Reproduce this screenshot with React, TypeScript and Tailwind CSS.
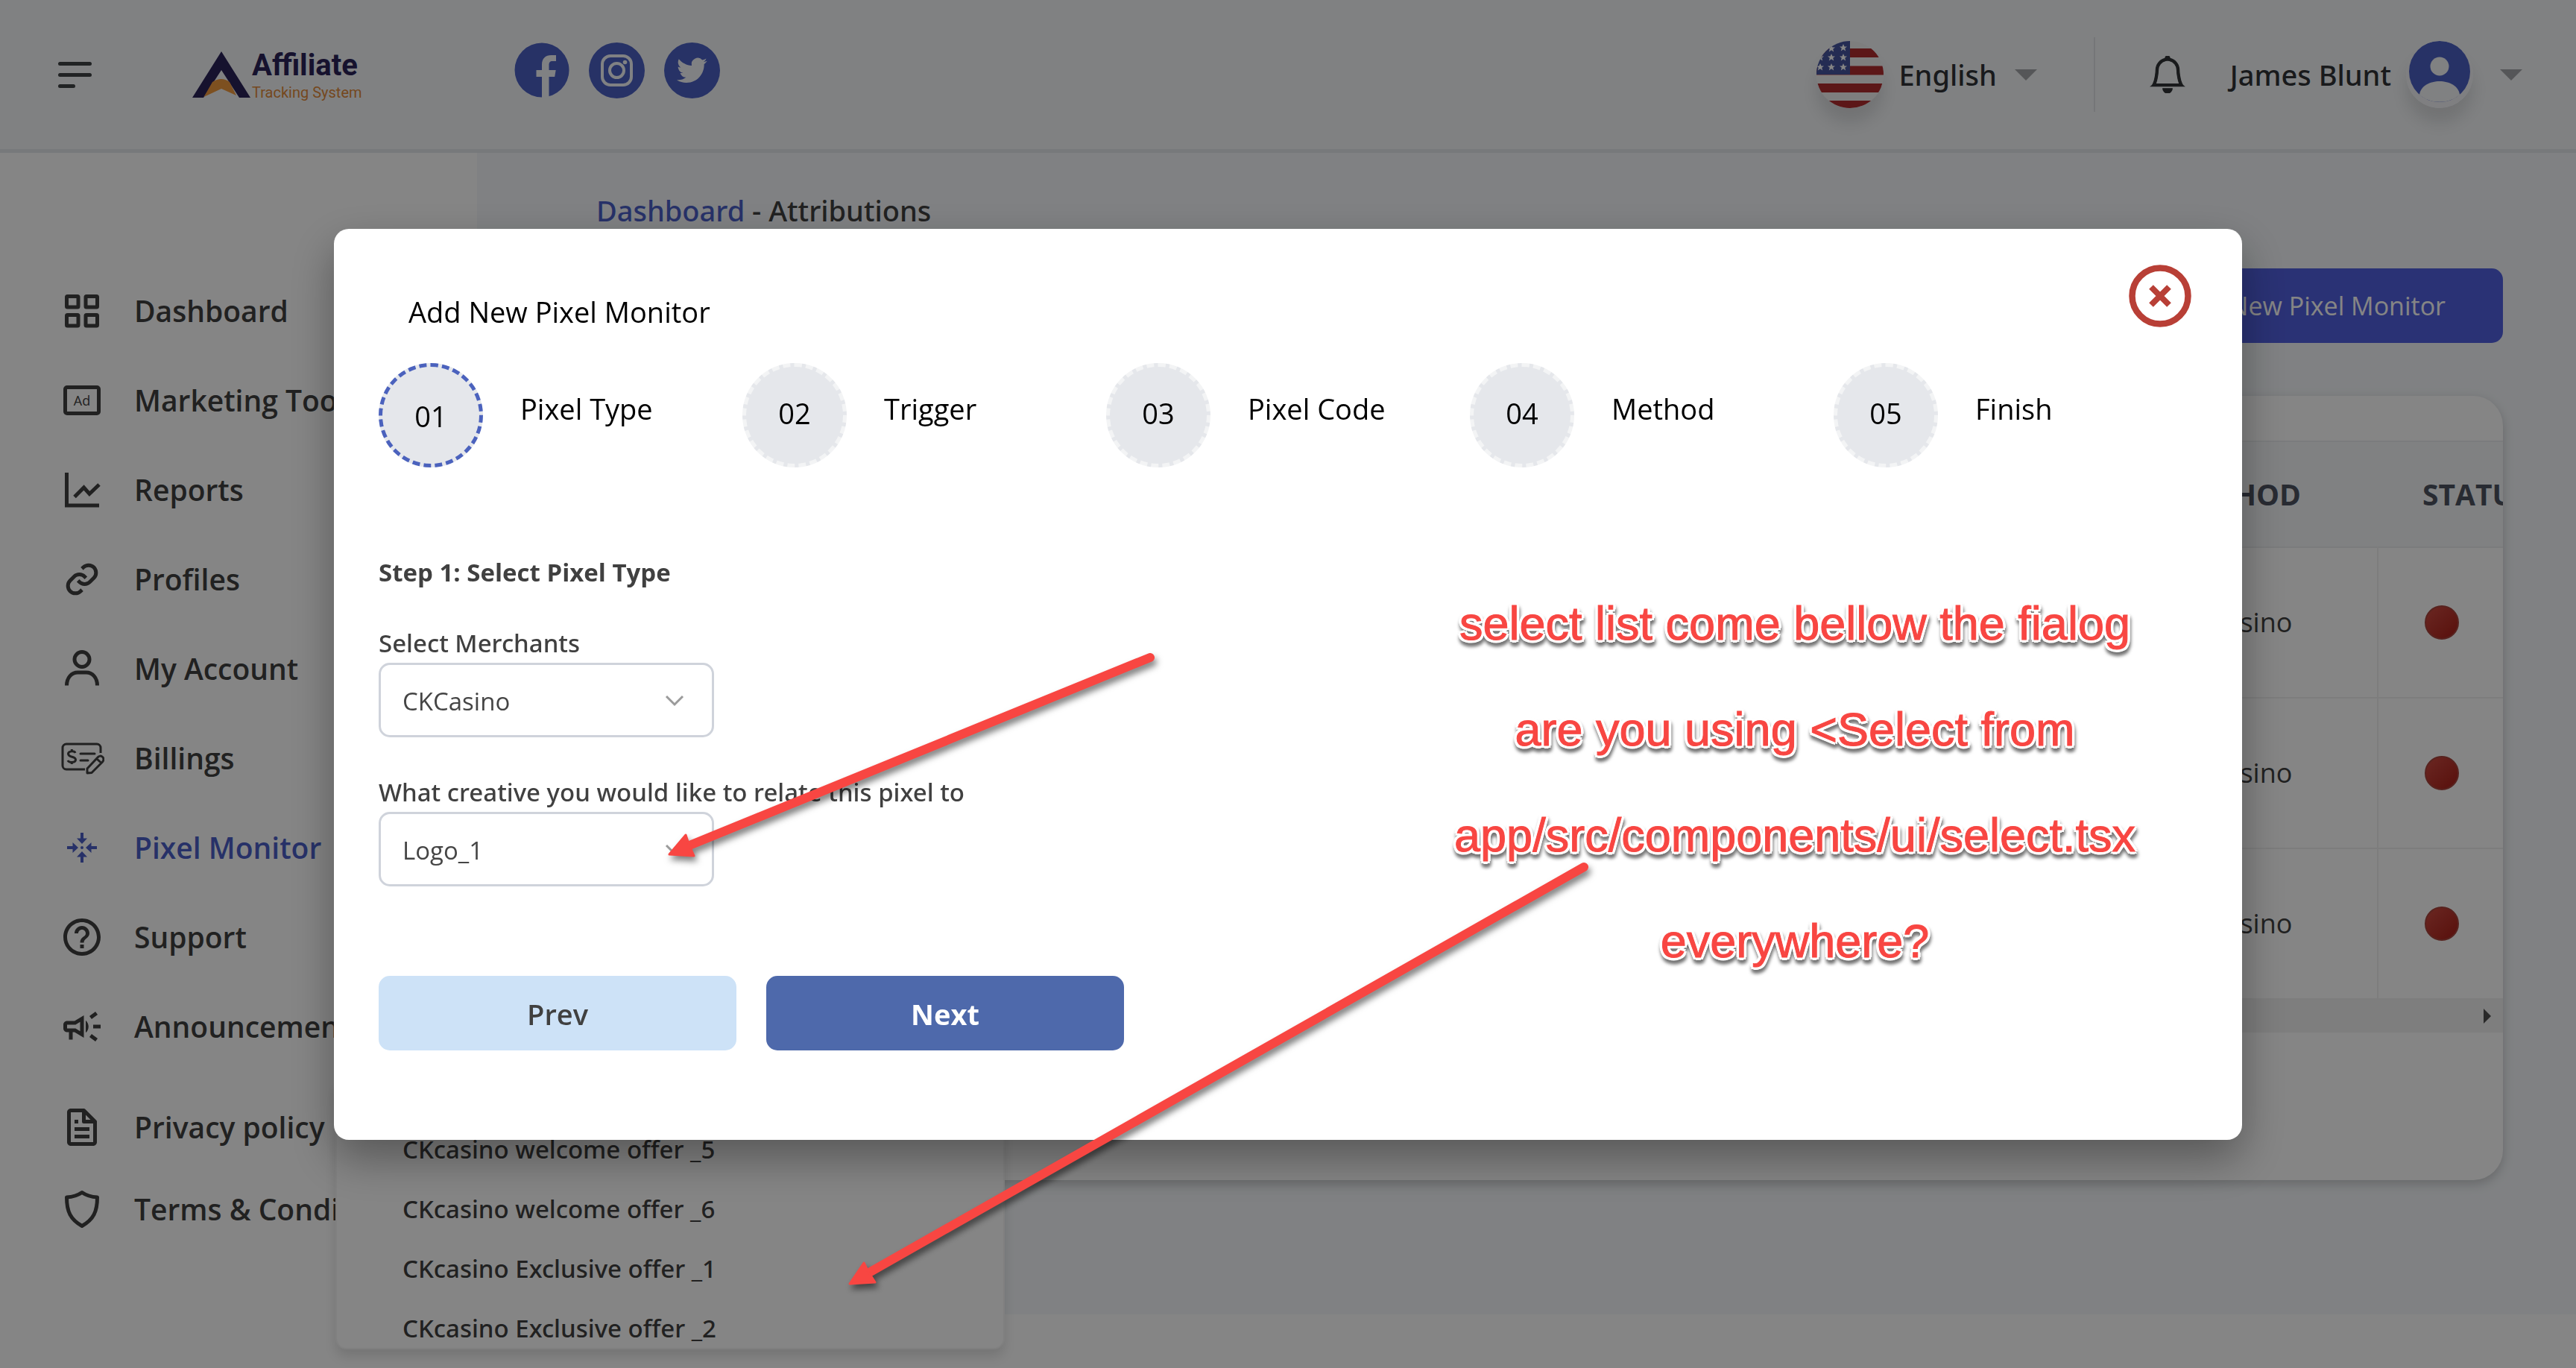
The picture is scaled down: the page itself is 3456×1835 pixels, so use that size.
import type { ReactNode } from "react";
import { BiFile, BiLink } from "react-icons/bi";
import { BsBell } from "react-icons/bs";
import { MdHelpOutline, MdOutlineCampaign } from "react-icons/md";

const iconBox = "size-[60px]";

function DashboardIcon() {
  return (
    <svg className={iconBox} viewBox="0 0 60 60" fill="none" stroke="currentColor" strokeWidth="5">
      <rect x="9.500" y="10.500" width="15.500" height="14.500" rx="1" />
      <rect x="35" y="10.500" width="15.500" height="14.500" rx="1" />
      <rect x="9.500" y="35.500" width="15.500" height="14.500" rx="1" />
      <rect x="35" y="35.500" width="15.500" height="14.500" rx="1" />
    </svg>
  );
}

function AdIcon() {
  return (
    <span className="flex h-10 w-[50px] items-center justify-center rounded-[5px] border-[5px] border-current text-[18px] leading-none font-normal">
      Ad
    </span>
  );
}

function ReportsIcon() {
  return (
    <svg className={iconBox} viewBox="0 0 60 60" fill="none" stroke="currentColor" strokeWidth="5">
      <path d="M9.500 7v44h43.500" />
      <path d="M20 39.500 32.500 27l7.500 8.500L53 23" />
    </svg>
  );
}

function AccountIcon() {
  return (
    <svg className={iconBox} viewBox="0 0 60 60" fill="none" stroke="currentColor" strokeWidth="5">
      <circle cx="30" cy="17.500" r="10" />
      <path d="M9.500 52.500c0-10 6-17.500 15-17.500h11c9 0 15 7.500 15 17.500" />
    </svg>
  );
}

function BillingsIcon() {
  return (
    <svg className={iconBox} viewBox="0 0 60 60" fill="none" stroke="currentColor" strokeWidth="3" strokeLinejoin="round">
      <path d="M34 45H9a5 5 0 0 1-5-5V16a5 5 0 0 1 5-5h41a5 5 0 0 1 5 5v7" />
      <path d="M28 24h19M28 33h10" strokeLinecap="round" />
      <path d="M21 23c-1-3-9-3-9.500 1 0 5.500 10 3 10 8 0 4.500-9 4.500-10.500 1M16.300 18v3M16.300 35v3" />
      <path d="M37 50v-6l14-15c4-5 11 1 6.500 6L43 49.500ZM50 31l6 5.500" />
    </svg>
  );
}

function PixelIcon() {
  return (
    <svg className={iconBox} viewBox="0 0 60 60" fill="currentColor">
      <circle cx="30" cy="30" r="2" />
      {[0, 90, 180, 270].map((angle) => (
        <path key={angle} d="M28 10h4v7.500h5L30 25l-7-7.500h5Z" transform={`rotate(${angle} 30 30)`} />
      ))}
    </svg>
  );
}

function ShieldIcon() {
  return (
    <svg className={iconBox} viewBox="0 0 60 60" fill="none" stroke="currentColor" strokeWidth="5" strokeLinejoin="round">
      <path d="M30 7.500c-5 3.500-12 6-20.500 6.500 0 19 5 30 20.500 38.500 15.500-8.500 20.500-19.500 20.500-38.500-8.500-.5-15.500-3-20.500-6.500Z" />
    </svg>
  );
}

const mainLinks: { label: string; icon: ReactNode; active?: boolean }[] = [
  { label: "Dashboard", icon: <DashboardIcon /> },
  { label: "Marketing Tools", icon: <AdIcon /> },
  { label: "Reports", icon: <ReportsIcon /> },
  { label: "Profiles", icon: <BiLink className={iconBox} /> },
  { label: "My Account", icon: <AccountIcon /> },
  { label: "Billings", icon: <BillingsIcon /> },
  { label: "Pixel Monitor", icon: <PixelIcon />, active: true },
  { label: "Support", icon: <MdHelpOutline className={iconBox} /> },
  { label: "Announcements", icon: <MdOutlineCampaign className={iconBox} /> },
];

const legalLinks = [
  { label: "Privacy policy", icon: <BiFile className={iconBox} /> },
  { label: "Terms & Conditions", icon: <ShieldIcon /> },
];

function NavItem({ label, icon, active, height }: { label: string; icon: ReactNode; active?: boolean; height: string }) {
  return (
    <a
      href="#"
      className={`flex items-center gap-10 pl-20 text-[39px] font-semibold whitespace-nowrap ${height} ${
        active ? "text-[#4b5fc8]" : "text-[#404040]"
      }`}
    >
      <span className="flex size-[60px] items-center justify-center">{icon}</span>
      {label}
    </a>
  );
}

function Logo() {
  return (
    <a href="#" className="flex items-center gap-[2px]">
      <svg className="h-[62px] w-[78px]" viewBox="0 0 78 62">
        <path fill="#2b2358" d="M39 0 78 62H63L39 25 15 62H0Z" />
        <path fill="#f0993f" d="M15.500 61 27 41q12-8 23 0l9 18-20-9Z" />
      </svg>
      <span className="flex flex-col font-[Roboto,sans-serif] whitespace-nowrap">
        <span className="text-[40px] leading-[48px] font-bold text-[#2b2358]">Affiliate</span>
        <span className="text-[20px] leading-[24px] text-[#e08a3a]">Tracking System</span>
      </span>
    </a>
  );
}

function Socials() {
  return (
    <div className="flex items-center gap-[26px] text-[#4b60c4]">
      <a href="#" aria-label="Facebook">
        <svg className="size-[74px]" viewBox="0 0 74 74">
          <circle cx="37" cy="37" r="36.500" fill="currentColor" />
          <path fill="#f6f8fb" d="M37 74V46h-7.500v-9H37v-7c0-9 5-13 12.500-13H56v8h-4.500c-4 0-5 2-5 5.500V37h9.200l-1.500 9h-7.700v28Z" />
        </svg>
      </a>
      <a href="#" aria-label="Instagram">
        <svg className="size-[75px]" viewBox="0 0 75 75">
          <circle cx="37.500" cy="37.500" r="37.500" fill="currentColor" />
          <g fill="none" stroke="#f6f8fb" strokeWidth="4">
            <rect x="18" y="18" width="39" height="39" rx="11" />
            <circle cx="37.500" cy="37.500" r="9.500" />
          </g>
          <circle cx="48.500" cy="26.500" r="2.800" fill="#f6f8fb" />
        </svg>
      </a>
      <a href="#" aria-label="Twitter">
        <svg className="size-[75px]" viewBox="0 0 75 75">
          <circle cx="37.500" cy="37.500" r="37.500" fill="currentColor" />
          <path
            fill="#f6f8fb"
            transform="translate(17 17) scale(1.700)"
            d="M23.950 4.570a10 10 0 0 1-2.820.770 4.960 4.960 0 0 0 2.160-2.720c-.95.550-2 .950-3.130 1.180a4.920 4.920 0 0 0-8.380 4.480C7.690 8.090 4.070 6.130 1.640 3.160a4.820 4.820 0 0 0-.67 2.480c0 1.710.870 3.210 2.190 4.100a4.900 4.900 0 0 1-2.230-.620v.060a4.920 4.920 0 0 0 3.950 4.830 5 5 0 0 1-2.210.080 4.940 4.940 0 0 0 4.600 3.420A9.870 9.870 0 0 1 0 19.540a14 14 0 0 0 7.550 2.210c9.050 0 14-7.500 14-13.980 0-.21 0-.42-.02-.63a9.940 9.940 0 0 0 2.420-2.570Z"
          />
        </svg>
      </a>
    </div>
  );
}

function UsFlag() {
  const star = "M0-5 1.500-1.500 5-1.500 2.200.800 3.200 4.500 0 2.200-3.200 4.500-2.200.800-5-1.500-1.500-1.500Z";
  const stars = [
    [36, 9], [20, 10], [36, 22], [20, 22], [5, 22], [36, 35], [20, 35], [5, 35],
  ];
  return (
    <svg className="size-[90px] rounded-full shadow-[0_20px_25px_rgba(0,0,0,0.12)]" viewBox="0 0 90 90">
      <rect width="90" height="90" fill="#f2f2f2" />
      {[10, 33.500, 57, 80].map((y) => (
        <rect key={y} y={y} width="90" height="12" fill="#b02c2f" />
      ))}
      <rect width="45" height="45" fill="#46559f" />
      {stars.map(([x, y]) => (
        <path key={`${x}-${y}`} d={star} transform={`translate(${x} ${y})`} fill="#fff" />
      ))}
    </svg>
  );
}

function Caret() {
  return (
    <svg className="h-[15px] w-[30px]" viewBox="0 0 30 15">
      <path d="M0 0h30L15 15Z" fill="#a3a6a9" />
    </svg>
  );
}

function Header() {
  return (
    <header className="flex h-[205px] items-center justify-between border-b-[5px] border-[#e5e8ec] bg-[#f6f8fa] pr-[72px] pl-[78px]">
      <div className="flex items-center">
        <button type="button" aria-label="Menu" className="flex w-[45px] flex-col gap-[10px]">
          <span className="h-[5px] w-full rounded-full bg-[#404346]" />
          <span className="h-[5px] w-full rounded-full bg-[#404346]" />
          <span className="h-[5px] w-1/2 rounded-full bg-[#404346]" />
        </button>
        <div className="ml-[135px] w-[432px]">
          <Logo />
        </div>
        <div className="pb-3">
          <Socials />
        </div>
      </div>
      <div className="flex items-center font-['Noto_Sans',sans-serif] text-[38px] font-medium text-[#303336]">
        <button type="button" className="flex items-center">
          <UsFlag />
          <span className="mr-6 ml-5">English</span>
          <Caret />
        </button>
        <span className="ml-[76px] h-[100px] w-[2px] bg-[#e0e3e7]" />
        <button type="button" aria-label="Notifications" className="ml-[72px]">
          <BsBell className="size-[50px]" stroke="currentColor" strokeWidth="0.4" />
        </button>
        <button type="button" className="ml-[59px] flex items-center">
          James Blunt
          <svg className="mr-9 ml-5 size-[90px] rounded-full shadow-[0_20px_25px_rgba(0,0,0,0.12)]" viewBox="0 0 90 90">
            <circle cx="45" cy="45" r="45" fill="#f3f4f8" />
            <circle cx="45" cy="41" r="41" fill="#4b60c4" />
            <circle cx="45" cy="34" r="12.500" fill="#f6f8fa" />
            <path d="M18 72c3-24 51-24 54 0-14 13-40 13-54 0Z" fill="#f6f8fa" />
          </svg>
          <Caret />
        </button>
      </div>
    </header>
  );
}

function MonitorTable() {
  return (
    <section className="mt-[71px] rounded-[40px] bg-white pt-[60px] pb-[198px] shadow-[0_5px_15px_rgba(0,0,0,0.2)]">
      <div className="overflow-hidden">
        <table className="w-[calc(100%+80px)] table-fixed border-collapse text-left whitespace-nowrap">
          <colgroup>
            <col />
            <col className="w-[354px]" />
            <col className="w-[248px]" />
          </colgroup>
          <thead>
            <tr className="h-[142px] border-y-2 border-[#eceef0] bg-[#f6f8fa] text-[39px] text-[#4e5361]">
              <th aria-hidden="true" />
              <th className="pl-[80px] font-bold">METHOD</th>
              <th className="pl-[60px] font-bold">STATUS</th>
            </tr>
          </thead>
          <tbody>
            {[1, 2, 3].map((row) => (
              <tr key={row} className="h-[202px] border-b-2 border-[#f0f0f0] text-[36px] text-[#404040]">
                <td />
                <td className="border-r-2 border-[#f0f0f0] pl-[82px]">CKCasino</td>
                <td className="pl-[62px]">
                  <span
                    role="img"
                    aria-label="Inactive"
                    className="block size-[46px] rounded-full border-2 border-[#a8433c] bg-linear-135 from-[#cc4a42] to-[#a81c14]"
                  />
                </td>
              </tr>
            ))}
          </tbody>
        </table>
        <div className="flex h-11 items-center justify-end bg-[#f1f1f1] pr-4">
          <svg className="h-5 w-[10px]" viewBox="0 0 10 20">
            <path d="M0 0v20l10-10Z" fill="#505050" />
          </svg>
        </div>
      </div>
    </section>
  );
}

const offers = [
  "CKcasino welcome offer _5",
  "CKcasino welcome offer _6",
  "CKcasino Exclusive offer _1",
  "CKcasino Exclusive offer _2",
];

function OfferList() {
  return (
    <ul
      role="listbox"
      aria-label="Creatives"
      className="absolute bottom-[25px] left-[450px] w-[898px] rounded-[15px] border-2 border-[#f6f6f6] bg-white pt-10 font-['Noto_Sans',sans-serif] text-[33px] font-medium text-[#404040] shadow-[0_10px_15px_rgba(0,0,0,0.12)]"
    >
      {offers.map((offer) => (
        <li key={offer} role="option" aria-selected={false} className="flex h-20 items-center pt-7 pl-[88px]">
          {offer}
        </li>
      ))}
    </ul>
  );
}

const steps = ["Pixel Type", "Trigger", "Pixel Code", "Method", "Finish"];

function SelectField({ id, label, value }: { id: string; label: string; value: string }) {
  return (
    <div className="h-[200px]">
      <label
        htmlFor={id}
        className="block h-12 font-['Noto_Sans',sans-serif] text-[33px] leading-[44px] font-medium whitespace-nowrap"
      >
        {label}
      </label>
      <div className="relative w-[450px]">
        <select
          id={id}
          className="h-[100px] w-full appearance-none rounded-[15px] border-[3px] border-[#cfd3db] bg-white px-[29px] pt-1 text-[33px] text-[#454545]"
        >
          <option>{value}</option>
        </select>
        <svg className="pointer-events-none absolute top-[43px] right-10 h-4 w-[26px]" viewBox="0 0 26 16" fill="none">
          <path d="m2 2 11 11L24 2" stroke="#9b9b9b" strokeWidth="3" />
        </svg>
      </div>
    </div>
  );
}

function PixelDialog() {
  return (
    <div className="fixed inset-0 flex items-center justify-center bg-black/48">
      <div
        role="dialog"
        aria-modal="true"
        aria-labelledby="dialog-title"
        className="w-full max-w-[2560px] rounded-[20px] bg-white p-[60px] pb-[120px] text-[#404040] shadow-[0_25px_60px_rgba(0,0,0,0.35)]"
      >
        <div className="flex h-[120px] items-start justify-between pr-2 pl-10">
          <h2 id="dialog-title" className="pt-[21px] text-[38px] leading-[60px] text-black">
            Add New Pixel Monitor
          </h2>
          <button type="button" aria-label="Close" className="-mt-3">
            <svg className="size-[84px]" viewBox="0 0 84 84" fill="none" stroke="#b83f36">
              <circle cx="42" cy="42" r="37.500" strokeWidth="8.500" />
              <path d="m30 30 24 24M54 30 30 54" strokeWidth="8" />
            </svg>
          </button>
        </div>
        <ol className="grid grid-cols-5 text-[38px] text-black">
          {steps.map((step, index) => (
            <li key={step} className="flex items-center gap-[50px]">
              <span
                className={`flex size-[140px] items-center justify-center rounded-full border-[5px] border-dashed bg-[#e5e7eb] ${
                  index === 0 ? "border-[#4b62bd] pt-1" : "border-[#f3f4f5] pb-1"
                }`}
              >
                {`0${index + 1}`}
              </span>
              <span className="pb-4">{step}</span>
            </li>
          ))}
        </ol>
        <form>
          <h3 className="mt-[116px] mb-12 text-[33px] leading-[50px] font-bold">Step 1: Select Pixel Type</h3>
          <SelectField id="merchant" label="Select Merchants" value="CKCasino" />
          <SelectField id="creative" label="What creative you would like to relate this pixel to" value="Logo_1" />
          <div className="mt-[68px] flex gap-10 text-[38px]">
            <button type="button" className="h-[100px] w-[480px] rounded-[15px] bg-[#cde2f7] pt-1 font-semibold">
              Prev
            </button>
            <button type="button" className="h-[100px] w-[480px] rounded-[15px] bg-[#4e69ab] pt-1 font-bold text-white">
              Next
            </button>
          </div>
        </form>
      </div>
    </div>
  );
}

function Annotations() {
  return (
    <div className="pointer-events-none fixed inset-0">
      <svg
        className="absolute inset-0 size-full drop-shadow-[3px_6px_4px_rgba(0,0,0,0.5)]"
        viewBox="0 0 3456 1835"
        fill="#f84642"
        stroke="#f84642"
      >
        <path d="M1543 882 925 1134" strokeWidth="12" strokeLinecap="round" />
        <path d="m898 1146 22-26 4 12 7 16Z" strokeWidth="3" strokeLinejoin="round" />
        <path d="M2125 1163 1166 1707" strokeWidth="12" strokeLinecap="round" />
        <path d="m1140 1722 19-28 6 12 9 14Z" strokeWidth="3" strokeLinejoin="round" />
      </svg>
      <p className="absolute top-[765px] left-[1908px] w-[1000px] text-center font-['Liberation_Sans',sans-serif] text-[63px] leading-[142px] whitespace-nowrap text-[#f84642] drop-shadow-[1px_5px_2px_rgba(0,0,0,0.55)] [-webkit-text-stroke:1px_#f84642] [text-shadow:4px_0_white,-4px_0_white,0_4px_white,0_-4px_white,3px_3px_white,-3px_3px_white,3px_-3px_white,-3px_-3px_white]">
        select list come bellow the fialog
        <br />
        are you using &lt;Select from
        <br />
        app/src/components/ui/select.tsx
        <br />
        everywhere?
      </p>
    </div>
  );
}

export default function App() {
  return (
    <div className="relative h-screen overflow-hidden bg-white font-['Open_Sans','Noto_Sans',sans-serif]">
      <Header />
      <div className="flex items-start">
        <nav className="w-[640px] shrink-0 bg-white pt-[152px]">
          {mainLinks.map((link) => (
            <NavItem key={link.label} {...link} height="h-[120px]" />
          ))}
          <div className="mt-5">
            {legalLinks.map((link) => (
              <NavItem key={link.label} {...link} height="h-[110px]" />
            ))}
          </div>
        </nav>
        <main className="min-w-0 flex-1 bg-[#f5f8fb] px-[98px] pt-[52px] pb-[180px]">
          <p className="px-[62px] font-['Noto_Sans',sans-serif] text-[38px] leading-[50px] font-medium text-[#404040]">
            <a href="#" className="text-[#4b5fc8]">
              Dashboard
            </a>{" "}
            - Attributions
          </p>
          <div className="mt-[53px] flex justify-end">
            <button type="button" className="h-[100px] rounded-[15px] bg-[#5160e0] px-[77px] text-[34px] text-white">
              Add New Pixel Monitor
            </button>
          </div>
          <MonitorTable />
        </main>
      </div>
      <OfferList />
      <PixelDialog />
      <Annotations />
    </div>
  );
}
